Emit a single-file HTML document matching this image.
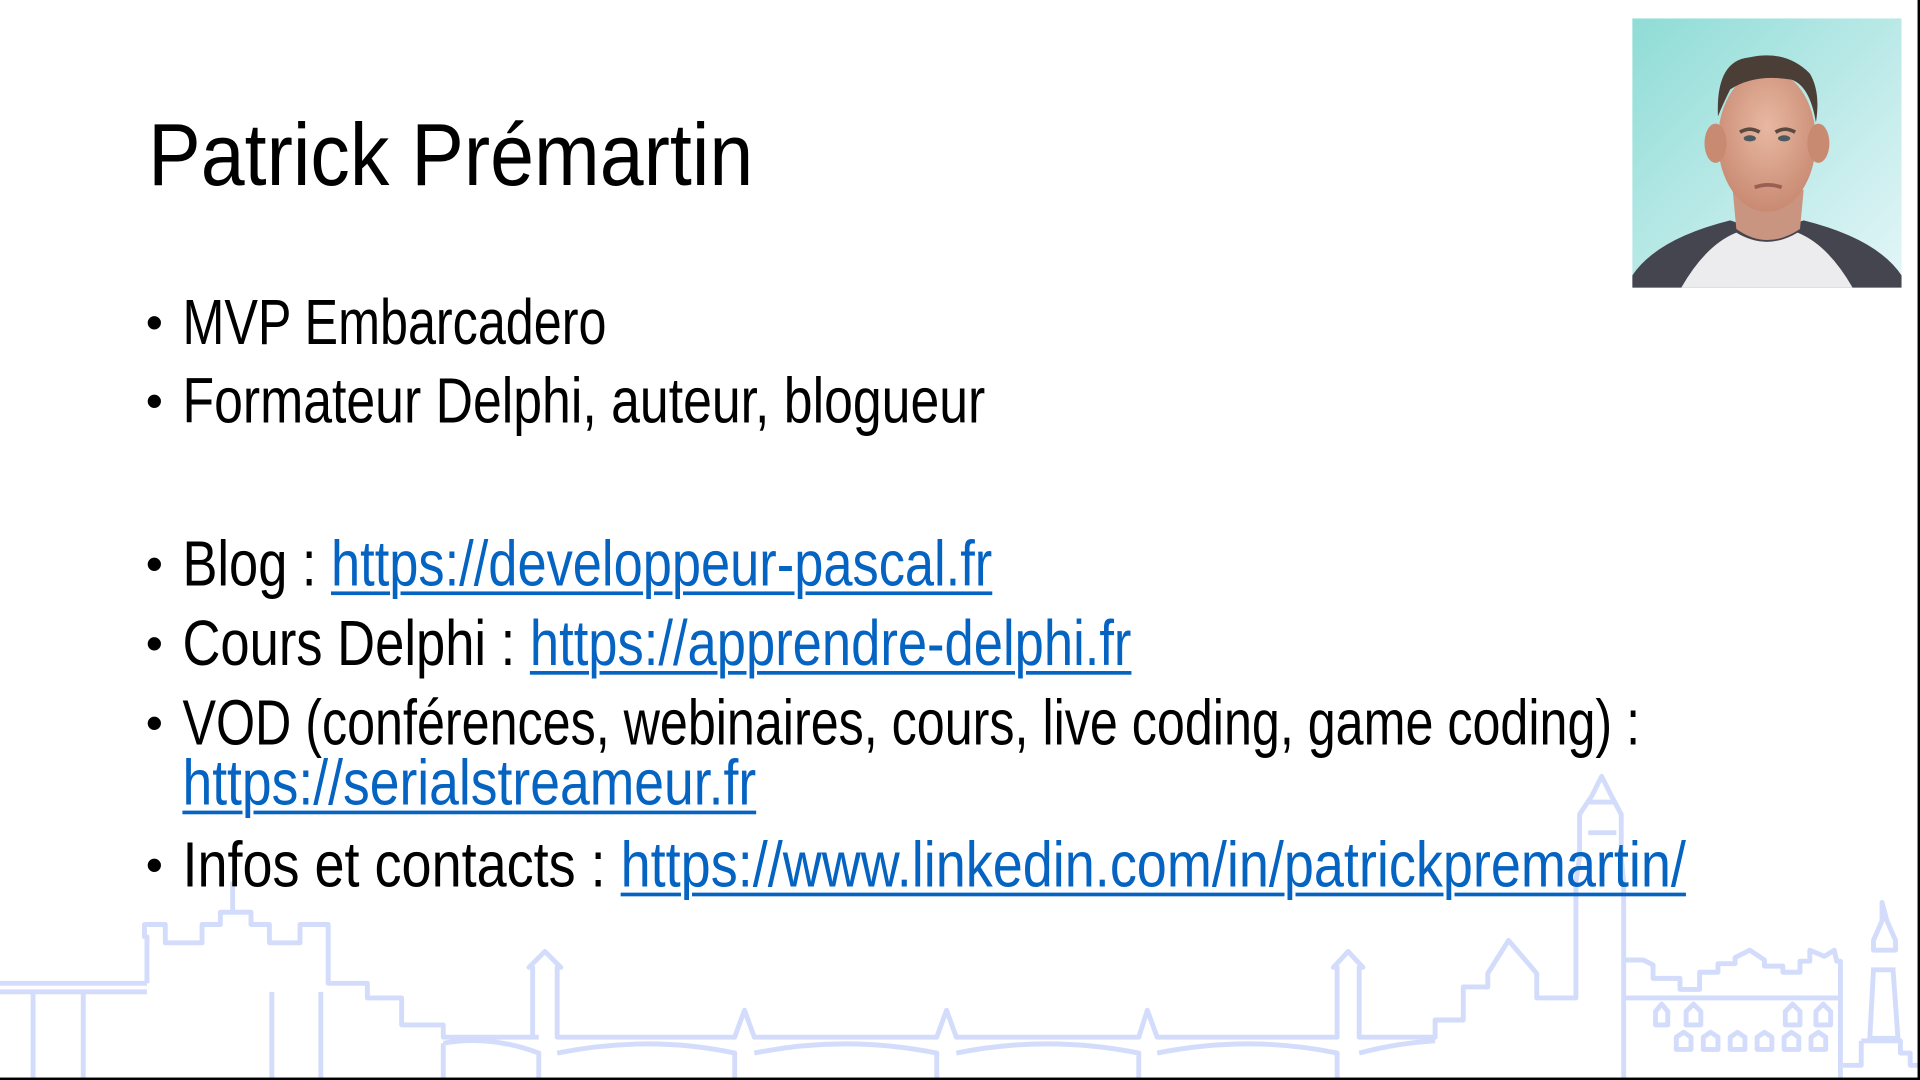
<!DOCTYPE html>
<html><head><meta charset="utf-8">
<style>
html,body{margin:0;padding:0;background:#fff;overflow:hidden}
#wrap{position:absolute;left:0;top:0;width:1568px;height:882px;transform:scale(1.22449);transform-origin:0 0;background:#fff;font-family:"Liberation Sans",sans-serif;color:#000}
.t{position:absolute;white-space:nowrap;transform-origin:0 0;line-height:1}
.title{left:121px;top:91px;font-size:72px;transform:scaleX(0.895);font-weight:normal}
.b{position:absolute;left:119px;font-size:40px;line-height:1}
.l{left:149px;font-size:52px}
a{color:#0563C1;text-decoration:underline;text-decoration-thickness:3px;text-underline-offset:5px}
</style></head><body>
<div id="wrap">
<svg width="1568" height="882" style="position:absolute;left:0;top:0" fill="none" stroke="#d3ddfb" stroke-width="4" stroke-linejoin="round">
<path d="M0 803H120M0 810H120M27 810V882M68 810V882"/>
<path d="M120 803V765H118V755H135V770H165V755H180V745H205V755H220V770H245V755H268V803H300V815H328V837H362V847H440"/>
<path d="M190 745V720"/>
<path d="M222 810V882M262 810V882"/>
<path d="M362 852V882M362 852Q400 845 440 860V882"/>
<path d="M435 847V790H432L445 777L458 790H455V847H600L608 825L616 847H765L773 825L781 847H930L937 825L945 847H1092V790H1089L1101 777L1113 790H1110V847H1172V833H1195V806H1215V795L1232 768L1255 795V815H1287V720L1290 700V665L1300 650L1308 634L1316 650L1324 665V700L1326 720V784H1342L1350 788V799H1372V808H1388V794H1403V787H1417V782L1429 776L1441 784V789H1456V794H1470V785H1478V776L1490 781L1498 776L1500 785H1503V880"/>
<path d="M455 860Q530 845 600 860V882M616 860Q690 845 765 860V882M781 860Q855 845 930 860V882M945 860Q1020 845 1092 860V882M1110 860Q1140 852 1172 850"/>
<path d="M1326 784V882M1326 815H1503"/>
<path d="M1297 680H1320M1298 655H1318"/>
<path d="M1352 837V826L1357 820L1362 826V837ZM1377 837V826L1383 820L1389 826V837ZM1458 837V826L1464 820L1470 826V837ZM1483 837V826L1489 820L1495 826V837Z"/>
<path d="M1369 857V847L1375 843L1381 847V857ZM1391 857V847L1397 843L1403 847V857ZM1413 857V847L1419 843L1425 847V857ZM1435 857V847L1441 843L1447 847V857ZM1457 857V847L1463 843L1469 847V857ZM1479 857V847L1485 843L1491 847V857Z"/>
<path d="M1537 737V752L1530 768V776H1548V768L1541 752ZM1528 792H1548M1530 792L1527 848H1550L1546 792M1520 850H1552V860H1560V870H1568M1520 850V870H1505"/>
</svg>
<svg width="220" height="220" viewBox="0 0 220 220" style="position:absolute;left:1333px;top:15px">
<defs><linearGradient id="bg" x1="0" y1="0" x2="1" y2="1"><stop offset="0" stop-color="#8fdcd6"/><stop offset="1" stop-color="#e4f6f8"/></linearGradient>
<radialGradient id="sk" cx="0.5" cy="0.4" r="0.6"><stop offset="0" stop-color="#e8b8a2"/><stop offset="1" stop-color="#c98a72"/></radialGradient></defs>
<rect width="220" height="220" fill="url(#bg)"/>
<path d="M0 210Q20 180 80 165L110 175L140 165Q200 180 220 210V220H0Z" fill="#45454f"/>
<path d="M40 220Q60 185 85 175Q110 190 135 175Q160 185 180 220Z" fill="#ececee"/>
<path d="M82 140L85 172Q110 190 137 172L140 140Z" fill="#c99480"/>
<ellipse cx="110" cy="100" rx="40" ry="58" fill="url(#sk)"/>
<ellipse cx="68" cy="102" rx="9" ry="16" fill="#c98a72"/><ellipse cx="152" cy="102" rx="9" ry="16" fill="#c98a72"/>
<path d="M70 80Q68 35 95 32Q125 25 145 45Q154 60 150 85Q145 55 130 50Q100 45 80 58Q74 70 70 80Z" fill="#4a3e36"/>
<path d="M88 93Q96 88 104 93M117 93Q125 88 133 93" stroke="#5a4a40" stroke-width="3" fill="none"/>
<ellipse cx="96" cy="98" rx="5" ry="2.5" fill="#4a5a60"/><ellipse cx="124" cy="98" rx="5" ry="2.5" fill="#4a5a60"/>
<path d="M100 138Q111 134 122 138" stroke="#9a5e52" stroke-width="3" fill="none"/>
</svg>
<div class="t title">Patrick Prémartin</div>
<div class="b" style="top:244px">•</div><div class="t l" style="top:238px;transform:scaleX(0.79)">MVP Embarcadero</div>
<div class="b" style="top:308px">•</div><div class="t l" style="top:302px;transform:scaleX(0.813)">Formateur Delphi, auteur, blogueur</div>
<div class="b" style="top:441px">•</div><div class="t l" style="top:435px;transform:scaleX(0.823)">Blog : <a>https://developpeur-pascal.fr</a></div>
<div class="b" style="top:506px">•</div><div class="t l" style="top:500px;transform:scaleX(0.825)">Cours Delphi : <a>https://apprendre-delphi.fr</a></div>
<div class="b" style="top:571px">•</div><div class="t l" style="top:565px;transform:scaleX(0.789)">VOD (conférences, webinaires, cours, live coding, game coding) :</div>
<div class="t l" style="top:614px;transform:scaleX(0.84)"><a>https://serialstreameur.fr</a></div>
<div class="b" style="top:687px">•</div><div class="t l" style="top:681px;transform:scaleX(0.848)">Infos et contacts : <a>https://www.linkedin.com/in/patrickpremartin/</a></div>
<div style="position:absolute;left:1566px;top:0;width:2px;height:882px;background:#000"></div>
<div style="position:absolute;left:0;top:880px;width:1568px;height:2px;background:#000"></div>
</div>
</body></html>
